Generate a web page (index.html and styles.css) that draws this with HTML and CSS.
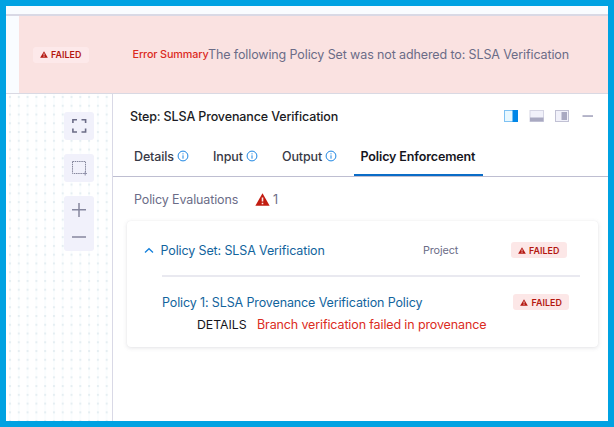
FILE: index.html
```html
<!DOCTYPE html>
<html lang="en">
<head>
<meta charset="utf-8">
<title>Policy Enforcement</title>
<link rel="stylesheet" href="styles.css">
</head>
<body>
<svg class="defs" width="0" height="0" aria-hidden="true">
  <symbol id="warn" viewBox="0 0 16 14"><path fill="currentColor" d="M8 0.3 15.7 13.7H0.3Z"/><path class="mark" d="M8 4.8V9.2M8 10.4V12"/></symbol>
  <symbol id="info" viewBox="0 0 12 12"><circle cx="6" cy="6" r="4.9" fill="none" stroke="currentColor"/><path d="M6 5.3V8.7M6 3.3V4.4" stroke="currentColor" stroke-width="1"/></symbol>
</svg>
<div class="frame">
  <div class="strip"></div>
  <header class="banner">
    <span class="badge badge-light"><svg><use href="#warn"/></svg><span>FAILED</span></span>
    <span class="summary">Error Summary</span>
    <span class="message">The following Policy Set was not adhered to: SLSA Verification</span>
  </header>
  <main class="body">
    <aside class="canvas">
      <svg class="dots" width="106" height="327">
        <defs><pattern id="grid" x="3" y="2" width="8.79" height="8.76" patternUnits="userSpaceOnUse"><rect x="0" width="2" height="9" fill="#fafdfe"/><rect width="2" height="2" fill="#e5eef2"/></pattern></defs>
        <rect width="106" height="327" fill="url(#grid)"/>
      </svg>
      <div class="tools">
        <button class="tool" aria-label="Fit"><svg width="30" height="28" viewBox="0 0 30 28"><path d="M8.9 11.1V7.7H13M17.5 7.7H21.6V11.1M21.6 16.6V20H17.5M13 20H8.9V16.6" fill="none" stroke="#6b6c87" stroke-width="1.6"/></svg></button>
        <button class="tool" aria-label="Select"><svg width="30" height="28" viewBox="0 0 30 28"><path d="M8.5 7.5H21.5V19.5H8.5Z" fill="none" stroke="#85869c" stroke-dasharray="1.5 .7"/><path d="M19 19.5H23M21.2 17.5V21.5" stroke="#9293ab"/></svg></button>
        <div class="tool zoom"><svg width="30" height="55" viewBox="0 0 30 55"><path d="M8 13.8H22M15 7V21M8 41H22" fill="none" stroke="#86879f" stroke-width="1.5"/></svg></div>
      </div>
    </aside>
    <section class="panel">
      <div class="panel-head">
        <h1>Step: SLSA Provenance Verification</h1>
        <svg class="layouts" width="90" height="14" viewBox="0 0 90 14">
          <rect x=".5" y="1.5" width="13" height="11" fill="#e8f8ff" stroke="#7fc2f3"/><rect x="8.5" y="1" width="5.5" height="12" fill="#0087e8"/>
          <rect x="26" y="1.5" width="13.5" height="11" fill="#f1f1fa" stroke="#d5d5e4"/><rect x="26" y="8.5" width="13.5" height="4" fill="#a9a9c1"/>
          <rect x="51.5" y="1.5" width="13" height="11" fill="#f1f1fa" stroke="#c1c1d4"/><rect x="57.5" y="3" width="5.5" height="8" fill="#a9a9c1"/>
          <rect x="78.5" y="6.2" width="10.5" height="1.7" fill="#aaaac1"/>
        </svg>
      </div>
      <nav class="tabs">
        <span class="tab details">Details<svg><use href="#info"/></svg></span>
        <span class="tab input">Input<svg><use href="#info"/></svg></span>
        <span class="tab output">Output<svg><use href="#info"/></svg></span>
        <span class="tab active">Policy Enforcement</span>
      </nav>
      <div class="evals"><span class="evals-label">Policy Evaluations</span><svg class="evals-icon"><use href="#warn"/></svg><span>1</span></div>
      <div class="card">
        <div class="set-row">
          <svg class="chevron" width="10" height="7" viewBox="0 0 10 7"><path d="M1 5.5 5 1.7 9 5.5" fill="none" stroke="#1580dc" stroke-width="1.3"/></svg>
          <a class="set-name">Policy Set: SLSA Verification</a>
          <span class="scope">Project</span>
          <span class="badge"><svg><use href="#warn"/></svg><span>FAILED</span></span>
        </div>
        <div class="policy">
          <div class="policy-row">
            <a class="policy-name">Policy 1: SLSA Provenance Verification Policy</a>
            <span class="badge"><svg><use href="#warn"/></svg><span>FAILED</span></span>
          </div>
          <div class="detail-row"><span class="detail-label">DETAILS</span><span class="reason">Branch verification failed in provenance</span></div>
        </div>
      </div>
    </section>
  </main>
</div>
</body>
</html>
```
FILE: styles.css
```css
* { box-sizing: border-box; }
body { margin: 0; font-family: Inter, "Liberation Sans", sans-serif; font-size: 12.5px; letter-spacing: -.125px; color: #6b6c87; }
.defs { display: block; height: 0; }
.frame { width: 614px; height: 427px; border: 6px solid #00a2e2; display: flex; flex-direction: column; background: #fff; overflow: hidden; }
.strip { height: 10px; flex: none; background: #f9fcff; border-bottom: 2px solid #d9d9e5; }
.banner { height: 78px; flex: none; display: flex; align-items: center; background: linear-gradient(90deg, #f9fcff 12.5px, #fae2e1 12.5px); border-bottom: 1px solid #d9d9e3; white-space: nowrap; }
.badge { display: flex; align-items: center; flex: none; gap: 3.5px; width: 56px; height: 16px; padding-left: 7px; border-radius: 3px; background: #fce7e7; color: #b41710; font-size: 8.9px; letter-spacing: .05px; font-weight: 600; white-space: nowrap; }
.badge svg { width: 8px; height: 7px; }
.badge-light { margin-left: 26.5px; background: #fde9ea; }
.mark { fill: none; stroke: #fce7e7; stroke-width: 1.7; }
.summary { width: 75.5px; margin-left: 44px; margin-top: -1px; color: #da291d; font-size: 10.8px; letter-spacing: -.13px; font-weight: 500; }
.message { letter-spacing: -.115px; }
.body { flex: 1; min-height: 0; display: flex; }
.canvas { position: relative; width: 107px; flex: none; border-right: 1px solid #d9d9e6; }
.dots { position: absolute; left: 0; top: 0; }
.tools { position: relative; display: flex; flex-direction: column; gap: 14px; padding: 18px 0 0 58px; }
.tool { display: block; width: 30px; height: 28px; padding: 0; border: 0; border-radius: 3px; background: #f1f1fb; }
.tool svg { display: block; }
.zoom { height: 55px; }
.panel { flex: 1; min-width: 0; white-space: nowrap; }
.panel-head { height: 44px; display: flex; align-items: center; justify-content: space-between; padding: 0 14px 0 17px; }
h1 { margin: 0; color: #1b1b24; font-size: 12.5px; font-weight: 500; letter-spacing: -.13px; }
.tabs { height: 39px; display: flex; border-bottom: 1.5px solid #bebed1; padding-left: 12px; }
.tab { display: flex; align-items: center; gap: 3px; height: 38px; padding: 0 9px 2px; color: #383946; font-weight: 500; }
.tab svg { width: 12px; height: 12px; color: #1d86e3; }
.details { width: 79px; }
.input { width: 69px; }
.output { width: 81px; }
.active { width: 129px; padding: 0 6.5px; color: #15151d; font-weight: 600; border-bottom: 2px solid #0a6cc7; }
.evals { height: 44px; display: flex; align-items: center; padding-left: 21px; }
.evals-label { width: 121px; }
.evals-icon { width: 15px; height: 13px; margin-right: 3px; color: #c21c10; }
.card { width: 471px; height: 126px; margin-left: 14px; border-radius: 4px; background: #fff; box-shadow: 0 0 1px rgba(40,41,61,.08), 0 1px 4px rgba(96,97,112,.17); }
.set-row { display: flex; align-items: center; height: 58px; padding-left: 17px; }
.chevron { margin-right: 6.5px; }
a { color: #12649d; }
.set-name { width: 262.5px; }
.scope { width: 87.5px; font-size: 10.8px; letter-spacing: -.1px; }
.policy { margin-left: 35px; width: 418px; margin-top: -4px; border-top: 2px solid #e9e9f0; }
.policy-row { display: flex; align-items: center; height: 50px; }
.policy-name { width: 351px; }
.detail-row { display: flex; align-items: center; height: 16px; margin-top: -11px; padding-left: 35px; color: #15151d; }
.detail-label { width: 60px; font-size: 12.3px; letter-spacing: -.03px; }
.reason { color: #db2c22; }
```
